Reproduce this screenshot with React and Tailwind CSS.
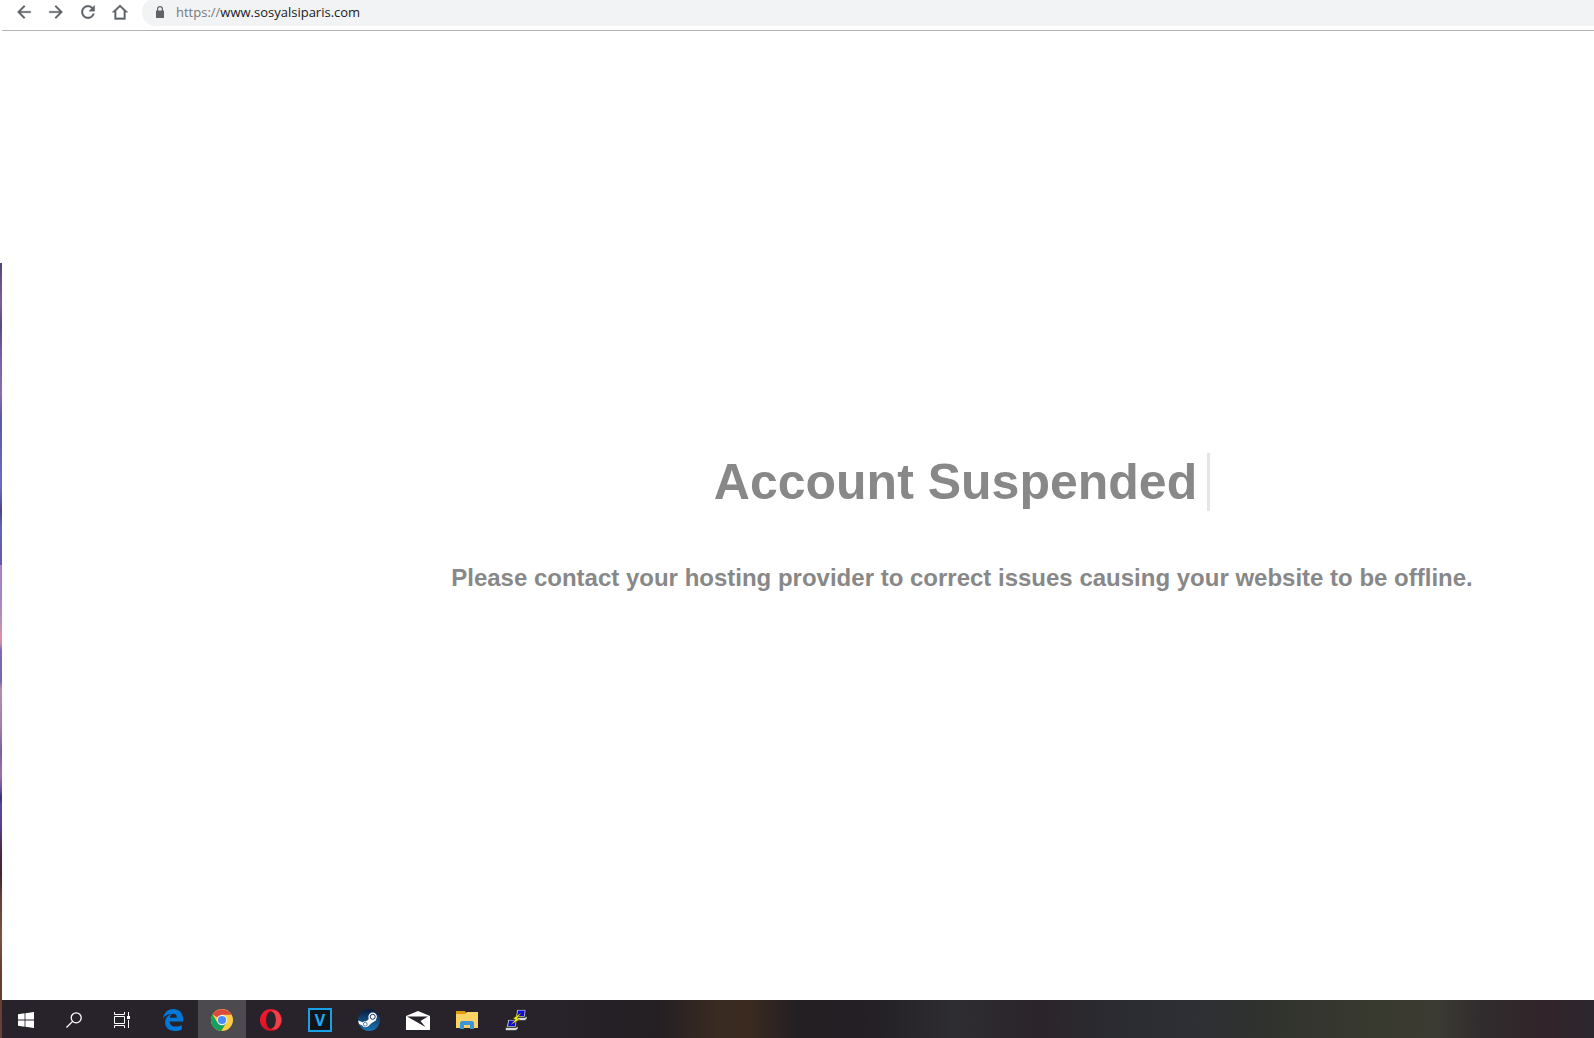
import React from "react";

const toolbarIcons = [
  {
    label: "Back",
    path: "M20 11H7.83l5.59-5.59L12 4l-8 8 8 8 1.41-1.41L7.83 13H20v-2z",
  },
  {
    label: "Forward",
    path: "M12 4l-1.41 1.41L16.17 11H4v2h12.17l-5.58 5.59L12 20l8-8z",
  },
  {
    label: "Reload",
    path: "M17.65 6.35C16.2 4.9 14.21 4 12 4c-4.42 0-7.99 3.58-7.99 8s3.57 8 7.99 8c3.73 0 6.84-2.55 7.73-6h-2.08c-.82 2.33-3.04 4-5.65 4-3.31 0-6-2.69-6-6s2.69-6 6-6c1.66 0 3.14.69 4.22 1.78L13 11h7V4l-2.35 2.35z",
  },
  {
    label: "Home",
    path: "M12 3.2L2.5 12.2h3V21h13v-8.8h3L12 3.2zm0 2.8l4.6 4.4V19H7.4v-8.6L12 6z",
  },
];

const StartIcon = () => (
  <svg width="16" height="16" viewBox="0 0 16 16" fill="#fff">
    <path d="M0 2.2L6.6 1.3V7.6H0zM7.4 1.2L16 0V7.6H7.4zM0 8.4H6.6V14.7L0 13.8zM7.4 8.4H16V16L7.4 14.8z" />
  </svg>
);

const SearchIcon = () => (
  <svg width="16" height="16" viewBox="0 0 16 16" fill="none" stroke="#fff" strokeWidth="1.3">
    <circle cx="10.2" cy="5.8" r="5" />
    <path d="M6.6 9.4L.5 15.5" />
  </svg>
);

const TaskViewIcon = () => (
  <svg width="18" height="16" viewBox="0 0 18 16" fill="none" stroke="#fff" strokeWidth="1">
    <path d="M1.5 0v2.5h10V0M1.5 16v-2.5h10V16M1.5 4.5h10v7h-10zM15.5 0v4M15.5 8v8" />
    <rect x="14" y="4" width="3" height="3" fill="#fff" stroke="none" />
  </svg>
);

const EdgeIcon = () => (
  <svg width="20" height="22" viewBox="0 0 20 22">
    <path
      fill="#0078d7"
      d="M0 9.7C.7 4.2 4.5 0 10.3 0 16.5 0 20 4.5 20 10v2.4H6.6c.1 3.6 2.8 5.2 6.2 5.2 2.3 0 4.2-.6 6-1.7v4.5C16.9 21.5 14.5 22 11.7 22 6.2 22 2.1 18.9 2.1 13.6c0-4 2.3-7 5.9-8.6C4.6 5.2 1.8 6.800 0 9.7zM6.8 8.7h7c0-2.7-1.2-4-3.3-4C8.5 4.7 7.100 6.3 6.8 8.7z"
    />
  </svg>
);

const ChromeIcon = () => (
  <svg width="22" height="22" viewBox="0 0 22 22">
    <circle cx="11" cy="11" r="11" fill="#ffcd42" />
    <path d="M11 11L1.5 5.5A11 11 0 0 1 20.5 5.8H11z" fill="#db4a3c" />
    <path d="M1.5 5.5A11 11 0 0 0 10.2 22L15.5 13.6 11 11 6.3 13.2z" fill="#15a05c" />
    <circle cx="11" cy="11" r="5.2" fill="#f1f1f1" />
    <circle cx="11" cy="11" r="4.1" fill="#4b8bf5" />
  </svg>
);

const OperaIcon = () => (
  <svg width="22" height="22" viewBox="0 0 22 22">
    <defs>
      <linearGradient id="operaRing" x1="0" y1="0" x2="1" y2="1">
        <stop offset="0" stopColor="#ff1b2d" />
        <stop offset="1" stopColor="#c00a1c" />
      </linearGradient>
    </defs>
    <path
      fill="url(#operaRing)"
      fillRule="evenodd"
      d="M11 0a11 11 0 1 0 0 22 11 11 0 0 0 0-22zm0 2.4c2.9 0 4.9 3.6 4.9 8.6s-2 8.6-4.9 8.6S6.1 16 6.1 11 8.1 2.4 11 2.4z"
    />
    <path
      fill="#f0414b"
      d="M11 2.4c1.8-1.3 4-1.3 6-.1a11 11 0 0 1 0 17.4c-2 1.2-4.2 1.2-6-.1 2.9 0 4.9-3.6 4.9-8.6S13.9 2.4 11 2.4z"
    />
  </svg>
);

const VegasIcon = () => (
  <span className="flex size-6 items-center justify-center border-2 border-[#18a0e8] bg-[#101417] font-['Open_Sans',sans-serif] text-base leading-5 font-bold text-[#20a8f4]">
    V
  </span>
);

const SteamIcon = () => (
  <svg width="22" height="22" viewBox="0 0 22 22">
    <defs>
      <linearGradient id="steamBall" x1="0" y1="0" x2="0" y2="1">
        <stop offset="0" stopColor="#0c1c3c" />
        <stop offset="1" stopColor="#1a74b4" />
      </linearGradient>
    </defs>
    <circle cx="11" cy="11" r="11" fill="url(#steamBall)" />
    <path d="M.2 11.5L6 13.8l4.5-3.2L11 6l7.5 5-5.5 3.4-2.6 2.8-3.8.4L1 15z" fill="#fff" />
    <circle cx="14.7" cy="7.8" r="4.2" fill="#fff" />
    <circle cx="14.7" cy="7.8" r="2.5" fill="#fff" stroke="#1b2f52" strokeWidth="1" />
    <circle cx="7.3" cy="15.2" r="3" fill="#fff" />
    <circle cx="7.3" cy="15.2" r="1.9" fill="none" stroke="#1b4f82" strokeWidth=".7" />
  </svg>
);

const MailIcon = () => (
  <svg width="24" height="19" viewBox="0 0 24 19">
    <path d="M0 5L12 0l12 5v14H0z" fill="#fff" />
    <path d="M1 5.5h21L14.5 10l5 6L1 5.5z" fill="#28222a" />
  </svg>
);

const FolderIcon = () => (
  <svg width="22" height="18" viewBox="0 0 22 18">
    <path d="M0 0h9l1 1.5V4H0z" fill="#e09a10" />
    <path d="M0 3h9l2-2h11v16H0z" fill="#fcd364" />
    <path d="M4 18v-6.5L5.5 10h11l1.5 1.5V18h-4v-4H8v4z" fill="#3a96d8" />
  </svg>
);

const PuttyComputer = ({ x, y }) => (
  <g transform={`translate(${x} ${y})`}>
    <path d="M2.5.5h9L10.500 8H1z" fill="#e4e2dc" stroke="#111" strokeWidth=".7" />
    <path d="M3.5 1.500h6.800L9.500 7H2.500z" fill="#0a0ae0" />
    <path d="M0 8.500h10.500L12.500 7v2.500l-2 2H0z" fill="#dcdcdc" stroke="#111" strokeWidth=".5" />
  </g>
);

const PuttyIcon = () => (
  <svg width="23" height="22" viewBox="0 0 23 22">
    <PuttyComputer x={9.5} y={0} />
    <PuttyComputer x={0.5} y={10} />
    <path d="M16.500 3.500L8 9.500l2.500 1L5.500 16l9-5.500-2.500-1z" fill="#f8f400" stroke="#3c3c00" strokeWidth=".4" />
  </svg>
);

const systemButtons = [
  { label: "Start", Icon: StartIcon },
  { label: "Search", Icon: SearchIcon },
  { label: "Task View", Icon: TaskViewIcon },
];

const apps = [
  { label: "Microsoft Edge", Icon: EdgeIcon },
  { label: "Google Chrome", Icon: ChromeIcon, active: true },
  { label: "Opera", Icon: OperaIcon },
  { label: "Vegas", Icon: VegasIcon },
  { label: "Steam", Icon: SteamIcon },
  { label: "Mail", Icon: MailIcon },
  { label: "File Explorer", Icon: FolderIcon },
  { label: "PuTTY", Icon: PuttyIcon },
];

const Toolbar = () => (
  <header className="flex h-[31px] shrink-0 items-start border-b border-[#b6b4b6] pl-3">
    <nav className="flex h-6 items-center gap-3">
      {toolbarIcons.map(({ label, path }) => (
        <button key={label} type="button" aria-label={label} className="size-5">
          <svg
            viewBox="0 0 24 24"
            className="size-5 fill-[#5f6368] stroke-[#5f6368]"
            strokeWidth="0.4"
          >
            <path d={path} />
          </svg>
        </button>
      ))}
    </nav>
    <div className="-mt-0.5 ml-3 flex h-7 flex-1 items-center rounded-l-full bg-[#f1f3f4] pl-3">
      <svg width="12" height="12" viewBox="0 0 12 12" className="fill-[#5f6368]">
        <path
          fillRule="evenodd"
          d="M2 4.5h1V3a3 3 0 0 1 6 0v1.5h1V12H2zM4.2 4.5h3.6V3a1.8 1.8 0 0 0-3.6 0z"
        />
      </svg>
      <a
        href="https://www.sosyalsiparis.com"
        className="ml-2.5 pt-px font-['Open_Sans',sans-serif] text-[13px] text-[#202124]"
      >
        <span className="text-[#75797e]">https://</span>www.sosyalsiparis.com
      </a>
    </div>
  </header>
);

const Taskbar = () => (
  <footer className="flex h-[38px] shrink-0 bg-[linear-gradient(90deg,#28222a_0%,#28222a_35%,#231f22_41%,#3a2b22_45%,#3a2a20_47%,#231f23_50%,#231f24_54%,#2e2d32_60%,#2b242a_65%,#2b2c32_70%,#2d2f34_75%,#31332e_80%,#38392f_86%,#3c3b33_90%,#302c2e_93%,#32242a_97%,#2b262e_100%)]">
    {systemButtons.map(({ label, Icon }) => (
      <button key={label} type="button" aria-label={label} className="flex w-12 items-center justify-center pt-0.5">
        <Icon />
      </button>
    ))}
    <div className="ml-[3px] flex gap-px">
      {apps.map(({ label, Icon, active }) => (
        <button
          key={label}
          type="button"
          aria-label={label}
          className={`flex w-12 items-center justify-center pt-0.5 ${active ? "bg-[#4c4a4f]" : ""}`}
        >
          <Icon />
        </button>
      ))}
    </div>
  </footer>
);

const App = () => {
  return (
    <div className="flex h-screen overflow-hidden bg-white">
      {/* Desktop wallpaper peeking out beside the window */}
      <div className="flex w-0.5 shrink-0 flex-col pt-[263px]">
        <div className="flex-1 bg-[linear-gradient(180deg,#54457f_0%,#7f5f98_5%,#5a4a88_8%,#7b64a8_13%,#8a6cac_17%,#5a5aa8_20%,#6a6cc4_29%,#4a4684_32%,#6464bc_34%,#6458a8_39%,#a982c4_39%,#a584c8_43%,#b78fb9_46%,#d990a8_48%,#d08fae_49%,#7c6ab4_50%,#7866b4_54%,#b98bb0_55%,#a47cac_60%,#7a60a2_63%,#a070a8_66%,#6450a4_68%,#3a3070_69%,#5a48a4_70%,#5a3c88_73%,#4c2648_76%,#4a2430_79%,#6b4038_82%,#7d5340_87%,#683c26_92%,#6b4230_100%)]" />
      </div>
      <div className="flex min-w-0 flex-1 flex-col">
        <Toolbar />
        <main className="flex flex-1 flex-col items-center justify-center gap-[53px] pt-3 pl-[328px] font-['Liberation_Sans',Arial,sans-serif] font-bold text-[#888]">
          <h1 className="border-r-3 border-[#e5e5e5] pr-2.5 text-[50px] leading-[58px]">
            Account Suspended
          </h1>
          <h2 className="text-2xl leading-[27px] whitespace-nowrap">
            Please contact your hosting provider to correct issues causing your website to be offline.
          </h2>
        </main>
        <Taskbar />
      </div>
    </div>
  );
};

export default App;
